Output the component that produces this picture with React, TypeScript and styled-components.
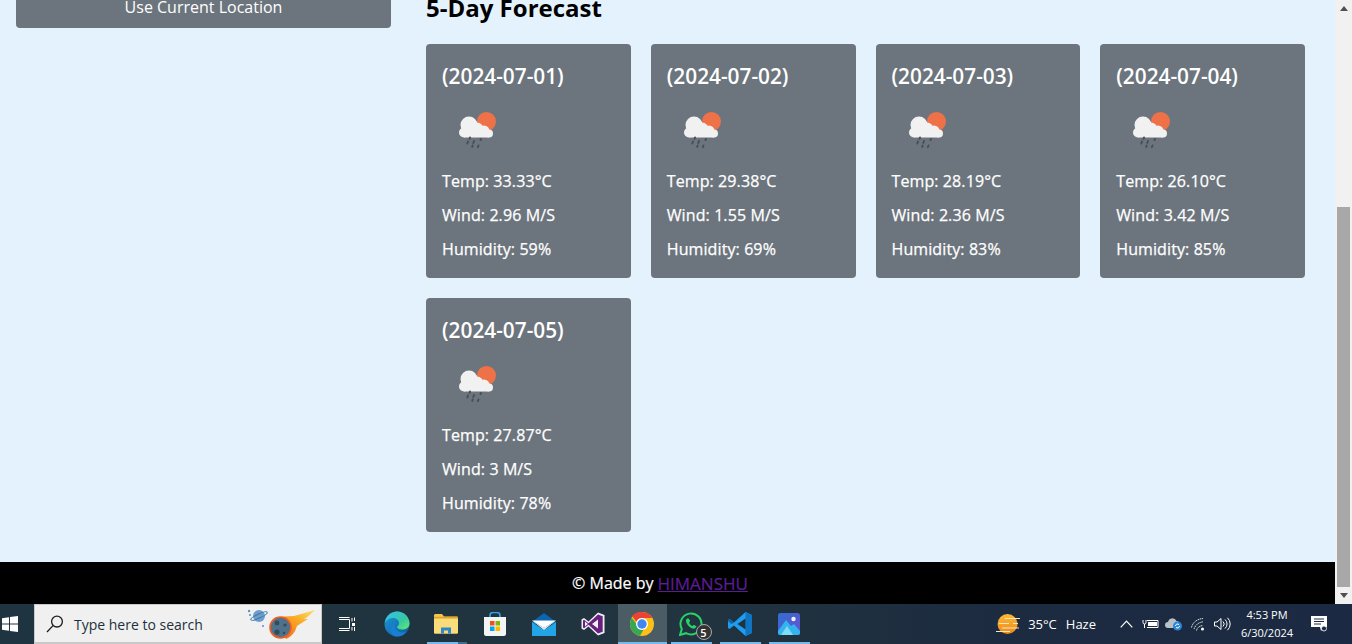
import React from "react";
import styled, { createGlobalStyle } from "styled-components";

const Global = createGlobalStyle`
  html, body { margin: 0; padding: 0; height: 100%; overflow: hidden; background: #e3f2fd; }
  * { box-sizing: border-box; }
  #root { height: 100%; }
`;

const Screen = styled.div`
  width: 1352px; height: 644px; display: flex; flex-direction: column; overflow: hidden;
  font-family: "Open Sans", "Noto Sans", sans-serif;
`;
const Viewport = styled.div`
  height: 604px; display: flex; flex: none; overflow: hidden;
`;
const Page = styled.div`
  width: 1335px; display: flex; flex-direction: column; overflow: hidden;
`;
const Content = styled.main`
  flex: 1; display: flex; align-items: flex-start; margin-top: -14px; padding: 0 30px 0 16px; gap: 35px;
`;
const Aside = styled.aside`
  width: 375px; flex: none;
`;
const LocationButton = styled.button`
  width: 100%; height: 42px; border: 0; border-radius: 4px; background: #6c757d; color: #fff;
  font: 400 16px/24px "Open Sans", sans-serif; padding: 0;
`;
const Forecast = styled.section`
  flex: 1; min-width: 0; padding-top: 7px;
`;
const Heading = styled.h2`
  margin: 0 0 22px; font-size: 24px; line-height: 29px; font-weight: 700; color: #000;
`;
const CardGrid = styled.div`
  display: grid; grid-template-columns: repeat(4, 1fr); gap: 20px;
`;
const Card = styled.article`
  background: #6c757d; border-radius: 4px; color: #fff; padding: 19px 16px 7px; height: 234px;
`;
const CardDate = styled.h3`
  margin: 0; font-size: 20.8px; line-height: 26px; font-weight: 600;
`;
const IconWrap = styled.div`
  height: 50px; margin: 12px 0 18px; display: flex;
`;
const Stat = styled.p`
  margin: 0 0 10px; font-size: 16px; line-height: 24px; font-weight: 500; letter-spacing: 0.1px; -webkit-text-stroke: 0.25px #fff;
`;
const Footer = styled.footer`
  height: 42px; flex: none; background: #000; color: #fff; display: flex; align-items: center; justify-content: center;
  font-size: 16px; font-weight: 500; padding-right: 15px; -webkit-text-stroke: 0.2px #fff;
  a { color: #5b1d96; -webkit-text-stroke: 0.2px #5b1d96; text-decoration: underline; margin-left: 4px; font-size: 17px; }
`;
const Scrollbar = styled.div`
  width: 17px; background: #f1f1f1; display: flex; flex-direction: column; align-items: center; flex: none;
`;
const Arrow = styled.div<{ $down?: boolean }>`
  height: 17px; flex: none; display: flex; align-items: center; justify-content: center; color: #505050;
  svg { transform: ${(p) => (p.$down ? "rotate(180deg)" : "none")}; }
`;
const Track = styled.div`
  flex: 1; width: 100%; display: flex; padding: 190px 2px 0 2px;
`;
const Thumb = styled.div`
  flex: 1; background: #a8a8a8;
`;
const Taskbar = styled.div`
  height: 40px; flex: none; display: flex; align-items: stretch;
  background: linear-gradient(90deg, #1e3440 0%, #21343f 50%, #1c2b40 75%, #1b2a42 100%);
  color: #fff;
`;
const StartSlot = styled.div`
  width: 34px; flex: none; display: flex; align-items: center; padding-left: 2px;
`;
const SearchBox = styled.div`
  width: 288px; flex: none; background: #f0f0f0; border: 1px solid #c9c9c9; border-bottom-width: 2px; display: flex; align-items: center;
  padding: 1px 5px 0 11px; color: #22303c; font-size: 14px; position: relative;
`;
const SearchText = styled.span`
  margin-left: 10px; flex: 1; white-space: nowrap;
`;
const DoodleSvg = styled.svg`
  position: absolute; left: 213px; top: 3px;
`;
const TaskViewSlot = styled.div`
  width: 50.5px; flex: none; display: flex; align-items: center; justify-content: center;
`;
const Slot = styled.div<{ $active?: boolean; $inset?: number }>`
  width: 49px; flex: none; display: flex; align-items: center; justify-content: center; position: relative;
  background: ${(p) => (p.$active ? "#4b5c65" : "transparent")};
  &::after {
    content: ""; position: absolute; bottom: 0; height: 2px; background: #76b9ed;
    left: ${(p) => p.$inset ?? 0}px; right: ${(p) => p.$inset ?? 0}px;
    display: ${(p) => (p.$inset === undefined ? "none" : "block")};
  }
`;
const FolderBar = styled.span`
  position: absolute; bottom: 0; left: 5px; right: 4px; height: 2px;
  background: linear-gradient(90deg, #76b9ed 0 31px, #3f6c8c 31px);
`;
const Badge = styled.span`
  position: absolute; left: 29px; top: 20px; width: 16px; height: 16px; border-radius: 50%; background: #333; border: 1px solid #aaa;
  color: #fff; font-size: 11px; font-weight: 600; display: flex; align-items: center; justify-content: center;
`;
const Tray = styled.div`
  margin-left: auto; display: flex; align-items: center; padding-right: 11px;
`;
const WeatherText = styled.span<{ $gap?: number }>`
  font-size: 13px; color: #fff; white-space: nowrap; margin-left: ${(p) => p.$gap ?? 0}px;
`;
const TrayIcon = styled.span<{ $gap?: number }>`
  width: 24px; flex: none; display: flex; align-items: center; justify-content: center; margin-left: ${(p) => p.$gap ?? 0}px;
`;
const Clock = styled.div`
  width: 62px; margin-left: 2px; text-align: center; font-size: 11px; line-height: 18px; white-space: nowrap;
`;
const Notify = styled.div`
  width: 43px; flex: none; display: flex; justify-content: center;
`;

const Weather = ({ id }: { id: string }) => (
  <svg width="64" height="50" viewBox="0 0 64 50">
    <defs>
      <filter id={id}><feGaussianBlur stdDeviation="0.3" /></filter>
    </defs>
    <g filter={`url(#${id})`}>
      <circle cx="44.500" cy="20.500" r="9.500" fill="#ef7146" />
      <g fill="#f1f1f1">
        <circle cx="22" cy="31.500" r="5" />
        <circle cx="27" cy="24" r="8.500" />
        <circle cx="35" cy="28" r="6.500" />
        <circle cx="42" cy="30" r="5.500" />
        <circle cx="47" cy="32.500" r="4" />
        <rect x="22" y="28" width="25" height="8.500" />
      </g>
      <g stroke="#4a4f55" strokeWidth="2" strokeLinecap="round">
        <path d="M28 36.500 l-.4 1.200" />
        <path d="M26 40.500 l-.7 2" />
        <path d="M32 40 l-.7 2" />
        <path d="M39 38 l-.5 1" />
        <path d="M30.700 44.500 l-.5 1.400" />
        <path d="M36.500 44.500 l-.6 1.600" />
      </g>
    </g>
  </svg>
);

const WindowsLogo = () => (
  <svg width="16" height="16" viewBox="0 0 16 16" fill="#fff">
    <path d="M0 2.200 7 1.200v6.300H0zM8 1 16 0v7.500H8zM0 8.500h7v6.300l-7-1zM8 8.500h8V16l-8-1.100z" />
  </svg>
);
const Magnifier = () => (
  <svg width="18" height="18" viewBox="0 0 18 18" fill="none" stroke="#1d1d1d" strokeWidth="1.300">
    <circle cx="11" cy="6.600" r="5.400" />
    <path d="M7 10.600 1 17" />
  </svg>
);
const Doodle = () => (
  <DoodleSvg width="70" height="36" viewBox="0 0 70 36">
    <defs>
      <linearGradient id="tail" x1="0" y1="1" x2="1" y2="0">
        <stop offset="0" stopColor="#ef5d1c" />
        <stop offset="0.6" stopColor="#f9a825" />
        <stop offset="1" stopColor="#fde36b" />
      </linearGradient>
    </defs>
    <circle cx="11" cy="8" r="6" fill="#6c9dcb" />
    <ellipse cx="11" cy="8" rx="9" ry="2" fill="none" stroke="#3f78ad" strokeWidth="1" transform="rotate(-25 11 8)" />
    <circle cx="1" cy="3" r="1.200" fill="#5b8fc2" />
    <circle cx="2" cy="7" r="1" fill="#5b8fc2" />
    <circle cx="15" cy="18" r="1" fill="#5b8fc2" />
    <path d="M26 10 Q36 8 46 8 L67 2 Q60 9 56 11 L60 11 Q52 16 49 18 Q46 28 38 31 Z" fill="url(#tail)" />
    <circle cx="32.500" cy="19.500" r="10.500" fill="#4f7189" stroke="#ee5f22" strokeWidth="1.600" />
    <circle cx="29" cy="15" r="2.400" fill="#2f4b60" />
    <circle cx="37" cy="17" r="1.600" fill="#2f4b60" />
    <circle cx="29" cy="24" r="2.600" fill="#2f4b60" />
    <circle cx="36" cy="25" r="1.200" fill="#2f4b60" />
  </DoodleSvg>
);
const TaskView = () => (
  <svg width="17" height="15" viewBox="0 0 17 15" fill="none" stroke="#fff" strokeWidth="1">
    <path d="M0 2.500h10.500v9H0M0 .5h10.500M0 13.500h10.500M13 1v3.500M13 10v3.500M15.500 .5v3.500" />
    <rect x="13" y="6" width="3" height="3" fill="#fff" stroke="none" />
    <path d="M15.500 10v4" />
  </svg>
);
const Edge = () => (
  <svg width="26" height="26" viewBox="0 0 26 26">
    <defs>
      <linearGradient id="edgeA" x1="0" y1="0" x2="1" y2="1">
        <stop offset="0" stopColor="#1c9ad6" />
        <stop offset="1" stopColor="#0c59a4" />
      </linearGradient>
      <linearGradient id="edgeB" x1="0" y1="0" x2="1" y2="1">
        <stop offset="0" stopColor="#35c1f1" />
        <stop offset="0.6" stopColor="#36c8a0" />
        <stop offset="1" stopColor="#66eb6e" />
      </linearGradient>
    </defs>
    <circle cx="13" cy="13" r="12.500" fill="url(#edgeA)" />
    <path d="M1 11C2.500 4 8 .5 13 .5 20 .5 25.500 6 25.500 12.500c0 4-3.500 6-7.500 6-3 0-5-1.500-5-2.500 0-1 2-1 2-4 0-3-3-5-6-5-3 0-5.500 1.500-7.500 4Z" fill="url(#edgeB)" />
    <path d="M13 25.500C7 25.500 5.500 19 7 15c1-2.500 3-4 5-4-2 2-2 6 1 8.500 3 2.500 7 2.500 10 1-2.500 3-6 5-10 5Z" fill="#1a7fd0" />
  </svg>
);
const Explorer = () => (
  <svg width="24" height="20" viewBox="0 0 24 20">
    <path d="M0 1.500C0 .7.700 0 1.500 0H8l2 2.500h12.500c.8 0 1.500.7 1.500 1.500v14c0 .8-.7 1.500-1.500 1.500h-21C.7 19.500 0 18.800 0 18Z" fill="#f3c651" />
    <path d="M0 3.500h24" stroke="#e0a526" strokeWidth="1.500" />
    <path d="M0 5h24v13.500c0 .6-.5 1-1 1H1c-.5 0-1-.4-1-1Z" fill="#fbdc7a" />
    <path d="M7 19.500v-6h10v6h-3v-3h-4v3Z" fill="#2c88cf" />
  </svg>
);
const Store = () => (
  <svg width="24" height="24" viewBox="0 0 24 24">
    <path d="M7 6V3.500C7 1.500 8.500.5 10 .5h4c1.500 0 3 1 3 3V6" fill="none" stroke="#2fa7e8" strokeWidth="1.600" />
    <path d="M1 5h22v17c0 1-1 2-2 2H3c-1 0-2-1-2-2Z" fill="#f4f4f4" />
    <rect x="7" y="9" width="4.500" height="4.500" fill="#f25022" />
    <rect x="12.500" y="9" width="4.500" height="4.500" fill="#7fba00" />
    <rect x="7" y="14.500" width="4.500" height="4.500" fill="#00a4ef" />
    <rect x="12.500" y="14.500" width="4.500" height="4.500" fill="#ffb900" />
  </svg>
);
const Mail = () => (
  <svg width="24" height="23" viewBox="0 0 24 23">
    <path d="M0 9 12 0l12 9v2H0Z" fill="#0a66b0" />
    <path d="M0 9l12 8 12-8v14H0Z" fill="#22a5e6" />
    <path d="M0 7.500 12 15l12-7.500L12 17Z" fill="#e8f4fc" />
    <path d="M0 7.500h24L12 15Z" fill="#fff" />
  </svg>
);
const VisualStudio = () => (
  <svg width="24" height="24" viewBox="0 0 24 24">
    <path d="M17 .5 23.500 3v18L17 23.500 7.500 14.500 3 18 .5 16.500v-9L3 6l4.500 3.500Z" fill="#f1eef6" />
    <path d="M17 2.500 21.700 4.300v15.400L17 21.500 7.600 12.700 3 16.200 2 15.500v-7L3 7.800l4.600 3.500Z" fill="#68217a" />
    <path d="M17 7.500v9L11 12ZM4 9.500 7 12l-3 2.500Z" fill="#f1eef6" />
  </svg>
);
const Chrome = () => (
  <svg width="24" height="24" viewBox="0 0 24 24">
    <circle cx="12" cy="12" r="12" fill="#fbc116" />
    <path d="M12 0a12 12 0 0 1 10.400 6H12a6 6 0 0 0-5.600 3.800L2 4A12 12 0 0 1 12 0Z" fill="#ea4335" />
    <path d="M1.700 5.800A12 12 0 0 0 10 23.800L14.800 15.500a6 6 0 0 1-8-3Z" fill="#34a853" />
    <circle cx="12" cy="12" r="6" fill="#fff" />
    <circle cx="12" cy="12" r="4.700" fill="#4285f4" />
  </svg>
);
const WhatsApp = () => (
  <svg width="24" height="24" viewBox="0 0 24 24">
    <path d="M1 23 2.800 17A10.500 10.500 0 1 1 7 21.200Z" fill="none" stroke="#25d366" strokeWidth="2" />
    <path d="M8 6.500c-1 1-1.500 2.500-.5 4.500 1.500 3 3.500 4.500 6 5.500 2 .5 3.500-.5 4-2 0-.5-2.500-2-3-1.500l-1 1c-1.500-.5-3-2-3.500-3.500l1-1c.4-.5-1-3-1.500-3Z" fill="#25d366" />
  </svg>
);
const VSCode = () => (
  <svg width="24" height="24" viewBox="0 0 24 24">
    <path d="M17.500 0 24 3v18l-6.500 3L6 13.500 1.500 17 0 16V8l1.500-1L6 10.500Z" fill="#1f9cf0" />
    <path d="M17.500 0 24 3v18l-6.500 3Z" fill="#0e75c2" />
    <path d="M17.500 6.500v11L9.500 12Z" fill="#1e3440" />
    <path d="M0 8l1.500-1L6 10.500 3.500 12 0 9Z" fill="#0c63a8" />
  </svg>
);
const Photos = () => (
  <svg width="22" height="22" viewBox="0 0 22 22">
    <defs>
      <linearGradient id="phA" x1="0" y1="0" x2="1" y2="1">
        <stop offset="0" stopColor="#2d6fd0" />
        <stop offset="1" stopColor="#6a4fd0" />
      </linearGradient>
    </defs>
    <rect width="22" height="22" rx="2.500" fill="url(#phA)" />
    <circle cx="15.500" cy="6" r="2.200" fill="#f1f4ff" />
    <path d="M0 18 8 7l5 6 3-2 6 7v2a2 2 0 0 1-2 2H2a2 2 0 0 1-2-2Z" fill="#33b4ee" />
    <path d="M3 22 9 13l6 9Z" fill="#7ddcf8" />
  </svg>
);
const HazeSun = () => (
  <svg width="24" height="20" viewBox="0 0 24 20">
    <defs>
      <linearGradient id="hz" x1="0" y1="0" x2="0" y2="1">
        <stop offset="0" stopColor="#fbb934" />
        <stop offset="1" stopColor="#ee8a1c" />
      </linearGradient>
    </defs>
    <circle cx="11.500" cy="10" r="10" fill="url(#hz)" />
    <g stroke="#f9e6bd" strokeWidth="1.200">
      <path d="M9 4.500h15M3 9.500h10M17 9.500h5M6 14h17M0 17.500h14" />
    </g>
  </svg>
);
const Chevron = () => (
  <svg width="13" height="8" viewBox="0 0 13 8" fill="none" stroke="#fff" strokeWidth="1.200"><path d="M.7 7.300 6.500 1.200l5.800 6.100" /></svg>
);
const Battery = () => (
  <svg width="17" height="11" viewBox="0 0 17 11" fill="none" stroke="#fff" strokeWidth="1">
    <path d="M5 1.500h11v7H5" />
    <rect x="6" y="3" width="9" height="4" fill="#fff" stroke="none" />
    <path d="M1 1v2.500a1.500 1.500 0 0 0 3 0V1M2.500 5v4" />
  </svg>
);
const CloudSync = () => (
  <svg width="18" height="14" viewBox="0 0 18 14">
    <path d="M3 11a3 3 0 0 1 0-6 4.500 4.500 0 0 1 8.500-1 3 3 0 0 1 3 3v4Z" fill="#b8c0c8" />
    <circle cx="12.500" cy="9" r="4.500" fill="#2a86d6" />
    <path d="M10.500 9a2 2 0 0 1 3.500-1.300M14.500 9a2 2 0 0 1-3.500 1.300" stroke="#fff" strokeWidth="1" fill="none" />
  </svg>
);
const Wifi = () => (
  <svg width="14" height="13" viewBox="0 0 14 13" fill="none" stroke="#d9dee3" strokeWidth="1">
    <path d="M.5 9.500C1.500 5 5.500 1 12 .5M3 11C4 8 6.500 4.500 12 3.800M5.500 12.500C6 10 8 8 12 7.500" strokeDasharray="1.500 .6" />
    <circle cx="11.500" cy="11" r="1.500" fill="#fff" stroke="none" />
  </svg>
);
const Speaker = () => (
  <svg width="17" height="14" viewBox="0 0 17 14" fill="none" stroke="#fff" strokeWidth="1">
    <path d="M.5 5v4h2.500L7 12.500v-11L3 5Z" />
    <path d="M9 4.500a3.500 3.500 0 0 1 0 5M11 2.500a6 6 0 0 1 0 9M13.500 .8a8.500 8.500 0 0 1 0 12.400" />
  </svg>
);
const NotifyIcon = () => (
  <svg width="17" height="16" viewBox="0 0 17 16">
    <path d="M0 0h16v11h-3l-3 4-1-4H0Z" fill="#fff" />
    <path d="M3 3h10M3 5.500h10M3 8h7" stroke="#1b2a42" strokeWidth="1" />
    <circle cx="13" cy="12.500" r="2.500" fill="#1b2a42" stroke="#fff" strokeWidth=".8" />
  </svg>
);
const ArrowGlyph = () => (
  <svg width="8" height="5" viewBox="0 0 8 5" fill="currentColor"><path d="M4 0 8 5H0Z" /></svg>
);

const days = [
  { date: "2024-07-01", temp: "33.33", wind: "2.96", hum: 59 },
  { date: "2024-07-02", temp: "29.38", wind: "1.55", hum: 69 },
  { date: "2024-07-03", temp: "28.19", wind: "2.36", hum: 83 },
  { date: "2024-07-04", temp: "26.10", wind: "3.42", hum: 85 },
  { date: "2024-07-05", temp: "27.87", wind: "3", hum: 78 },
];

export default function App() {
  return (
    <Screen>
      <Global />
      <Viewport>
        <Page>
          <Content>
            <Aside>
              <LocationButton>Use Current Location</LocationButton>
            </Aside>
            <Forecast>
              <Heading>5-Day Forecast</Heading>
              <CardGrid>
                {days.map((d) => (
                  <Card key={d.date}>
                    <CardDate>({d.date})</CardDate>
                    <IconWrap><Weather id={`b${d.date}`} /></IconWrap>
                    <Stat>Temp: {d.temp}°C</Stat>
                    <Stat>Wind: {d.wind} M/S</Stat>
                    <Stat>Humidity: {d.hum}%</Stat>
                  </Card>
                ))}
              </CardGrid>
            </Forecast>
          </Content>
          <Footer>© Made by <a href="#himanshu">HIMANSHU</a></Footer>
        </Page>
        <Scrollbar>
          <Arrow><ArrowGlyph /></Arrow>
          <Track><Thumb /></Track>
          <Arrow $down><ArrowGlyph /></Arrow>
        </Scrollbar>
      </Viewport>
      <Taskbar>
        <StartSlot><WindowsLogo /></StartSlot>
        <SearchBox>
          <Magnifier />
          <SearchText>Type here to search</SearchText>
          <Doodle />
        </SearchBox>
        <TaskViewSlot><TaskView /></TaskViewSlot>
        <Slot><Edge /></Slot>
        <Slot><Explorer /><FolderBar /></Slot>
        <Slot><Store /></Slot>
        <Slot><Mail /></Slot>
        <Slot><VisualStudio /></Slot>
        <Slot $active $inset={0}><Chrome /></Slot>
        <Slot $inset={4}><WhatsApp /><Badge>5</Badge></Slot>
        <Slot $inset={4}><VSCode /></Slot>
        <Slot $inset={4}><Photos /></Slot>
        <Tray>
          <HazeSun />
          <WeatherText $gap={8}>35°C</WeatherText>
          <WeatherText $gap={9}>Haze</WeatherText>
          <TrayIcon $gap={18}><Chevron /></TrayIcon>
          <TrayIcon><Battery /></TrayIcon>
          <TrayIcon><CloudSync /></TrayIcon>
          <TrayIcon><Wifi /></TrayIcon>
          <TrayIcon><Speaker /></TrayIcon>
          <Clock>4:53 PM<br />6/30/2024</Clock>
          <Notify><NotifyIcon /></Notify>
        </Tray>
      </Taskbar>
    </Screen>
  );
}
